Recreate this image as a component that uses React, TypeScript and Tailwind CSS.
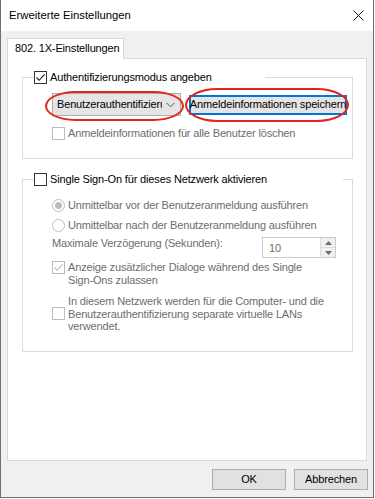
import React from "react";

function Check({ checked, disabled }: { checked?: boolean; disabled?: boolean }) {
  return (
    <span
      className={
        disabled
          ? "w-[13px] h-[13px] shrink-0 border border-[#bcbcbc] bg-white flex items-center justify-center"
          : "w-[13px] h-[13px] shrink-0 border border-[#333333] bg-white flex items-center justify-center"
      }
    >
      {checked && (
        <svg width="11" height="11" viewBox="0 0 11 11">
          <path
            d="M1.5 5.5 L4.2 8.3 L9.6 2.4"
            fill="none"
            stroke={disabled ? "#bcbcbc" : "#1a1a1a"}
            strokeWidth="1.1"
          />
        </svg>
      )}
    </span>
  );
}

function Radio({ checked }: { checked?: boolean }) {
  return (
    <span className="w-[13px] h-[13px] shrink-0 rounded-full border border-[#bcbcbc] bg-white flex items-center justify-center">
      {checked && <span className="w-[7px] h-[7px] rounded-full bg-[#bcbcbc]" />}
    </span>
  );
}

export default function App() {
  return (
    <div className="w-[375px] h-[499px] bg-white">
      <div className="w-[374px] h-[498px] bg-[#f0f0f0] border-l border-r border-b border-[#707070] flex flex-col font-['Liberation_Sans',Arial,sans-serif] text-[11px] leading-[13px] tracking-[-0.15px] text-black">
        {/* Title bar */}
        <div className="h-[31px] shrink-0 bg-white flex items-center justify-between pl-[8px] pr-[9px]">
          <span className="text-[11.3px] tracking-normal">Erweiterte Einstellungen</span>
          <svg width="11" height="11" viewBox="0 0 11 11" className="mt-[-1px]">
            <path d="M0.5 0.5 L10.5 10.5 M10.5 0.5 L0.5 10.5" stroke="#111" strokeWidth="1" />
          </svg>
        </div>

        {/* Body */}
        <div className="pl-[6px] pt-[7px]">
          <div className="relative z-10 -mb-px w-[117px] h-[21px] bg-white border border-b-0 border-[#d9d9d9] pl-[7px] pt-[3px]">
            802. 1X-Einstellungen
          </div>
          <div className="w-[360px] h-[403px] bg-white border border-[#d9d9d9] pl-[14px] pt-[12px]">
            {/* Group 1 */}
            <fieldset className="w-[331px] border border-[#dcdcdc] pb-[18px]">
              <legend className="ml-[11px] w-[231px] flex items-center gap-[3px] bg-white">
                <Check checked />
                <span>Authentifizierungsmodus angeben</span>
              </legend>
              <div className="pl-[29px]">
                <div className="relative mt-[9px] flex items-center">
                  <div className="w-[129px] h-[23px] border border-[#adadad] bg-[#e5e5e5] flex items-center pl-[4px] pr-[5px]">
                    <span className="w-[105px] overflow-hidden whitespace-nowrap">Benutzerauthentifizierung</span>
                    <svg width="9" height="6" viewBox="0 0 9 6" className="ml-auto">
                      <path d="M0.5 0.8 L4.5 4.8 L8.5 0.8" fill="none" stroke="#555" strokeWidth="1" />
                    </svg>
                  </div>
                  <div className="ml-[8px] w-[158px] h-[20px] border-2 border-[#0078d7] bg-[#e5e5e5] flex items-center justify-center whitespace-nowrap">
                    Anmeldeinformationen speichern
                  </div>
                  <span className="absolute left-[-7px] top-[-2px] w-[139px] h-[30px] rounded-[30px/15px] border-2 border-[#e3261d]" />
                  <span className="absolute left-[133px] top-[-5px] w-[164px] h-[34px] rounded-[32px/17px] border-2 border-[#e3261d]" />
                </div>
                <div className="mt-[11px] flex items-center gap-[3px] text-[#6d6d6d]">
                  <Check disabled />
                  <span>Anmeldeinformationen für alle Benutzer löschen</span>
                </div>
              </div>
            </fieldset>

            {/* Group 2 */}
            <fieldset className="mt-[14px] w-[331px] border border-[#dcdcdc] pb-[18px]">
              <legend className="ml-[11px] w-[309px] flex items-center gap-[3px] bg-white">
                <Check />
                <span>Single Sign-On für dieses Netzwerk aktivieren</span>
              </legend>
              <div className="pl-[29px] text-[#6d6d6d]">
                <div className="mt-[13px] flex items-center gap-[3px]">
                  <Radio checked />
                  <span>Unmittelbar vor der Benutzeranmeldung ausführen</span>
                </div>
                <div className="mt-[7px] flex items-center gap-[3px]">
                  <Radio />
                  <span>Unmittelbar nach der Benutzeranmeldung ausführen</span>
                </div>
                <div className="mt-[5px] flex items-start">
                  <span className="w-[210px]">Maximale Verzögerung (Sekunden):</span>
                  <div className="w-[74px] h-[21px] border border-[#cccccc] bg-white flex">
                    <span className="flex-1 pl-[6px] pt-[4px]">10</span>
                    <div className="w-[15px] flex flex-col border-l border-[#dcdcdc]">
                      <div className="flex-1 flex items-center justify-center bg-[#f0f0f0] border-b border-[#dcdcdc]">
                        <svg width="7" height="4" viewBox="0 0 7 4">
                          <path d="M0 4 L3.5 0 L7 4 Z" fill="#6d6d6d" />
                        </svg>
                      </div>
                      <div className="flex-1 flex items-center justify-center bg-[#f0f0f0]">
                        <svg width="7" height="4" viewBox="0 0 7 4">
                          <path d="M0 0 L3.5 4 L7 0 Z" fill="#6d6d6d" />
                        </svg>
                      </div>
                    </div>
                  </div>
                </div>
                <div className="mt-[3px] flex items-start gap-[3px]">
                  <Check checked disabled />
                  <span>
                    Anzeige zusätzlicher Dialoge während des Single
                    <br />
                    Sign-Ons zulassen
                  </span>
                </div>
                <div className="mt-[8px] flex items-center gap-[3px]">
                  <Check disabled />
                  <span className="leading-[12.5px]">
                    In diesem Netzwerk werden für die Computer- und die
                    <br />
                    Benutzerauthentifizierung separate virtuelle LANs
                    <br />
                    verwendet.
                  </span>
                </div>
              </div>
            </fieldset>
          </div>

          {/* Buttons */}
          <div className="mt-[8px] flex justify-end gap-[8px] pr-[5px]">
            <div className="w-[74px] h-[21px] border border-[#adadad] bg-[#e1e1e1] flex items-center justify-center">OK</div>
            <div className="w-[74px] h-[21px] border border-[#adadad] bg-[#e1e1e1] flex items-center justify-center">Abbrechen</div>
          </div>
        </div>
      </div>
    </div>
  );
}
